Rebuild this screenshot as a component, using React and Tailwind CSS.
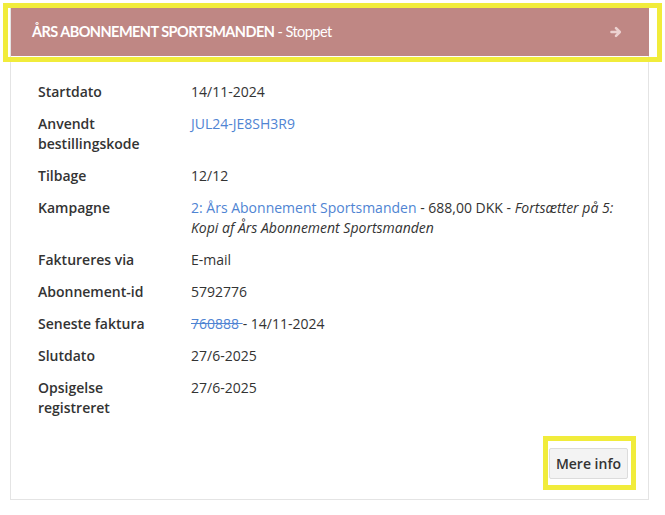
import React from 'react';

const rows = [
  { label: 'Startdato', value: '14/11-2024' },
  { label: ['Anvendt', 'bestillingskode'], value: <a className="text-[#4f84d3]">JUL24-JE8SH3R9</a> },
  { label: 'Tilbage', value: '12/12' },
  {
    label: 'Kampagne',
    value: (
      <>
        <a className="text-[#4f84d3]">2: Års Abonnement Sportsmanden</a> - 688,00 DKK -{' '}
        <em>Fortsætter på 5:</em>
        <br />
        <em>Kopi af Års Abonnement Sportsmanden</em>
      </>
    ),
  },
  { label: 'Faktureres via', value: 'E-mail' },
  { label: 'Abonnement-id', value: '5792776' },
  {
    label: 'Seneste faktura',
    value: (
      <>
        <a className="text-[#4f84d3] line-through">760888 </a>- 14/11-2024
      </>
    ),
  },
  { label: 'Slutdato', value: '27/6-2025' },
  { label: ['Opsigelse', 'registreret'], value: '27/6-2025' },
];

function ArrowIcon() {
  return (
    <svg width="12" height="12" viewBox="0 0 12 12" fill="none">
      <path d="M1.5 6h8M6 2.2L9.8 6 6 9.8" stroke="#ecd2d1" strokeWidth="2.6" strokeLinecap="round" strokeLinejoin="round" />
    </svg>
  );
}

export default function App() {
  return (
    <div className="relative w-[665px] h-[515px] bg-white pl-[10px] pt-[8px] font-['Open_Sans',sans-serif] text-[14px] leading-[20px] text-[#333]">
      <div className="w-[639px] border border-t-0 border-[#e4e4e4]">
        <div className="h-[48px] bg-[#bf8784] flex items-center justify-between pl-[21px] pr-[27px] -mr-px">
          <div className="text-white text-[14.5px] tracking-[-0.55px] font-['Lato',sans-serif]">
            <span className="font-bold">ÅRS ABONNEMENT SPORTSMANDEN</span> - Stoppet
          </div>
          <ArrowIcon />
        </div>
        <div className="pt-[26px] pl-[27px] pr-[20px] pb-[20px]">
          <div className="flex flex-col gap-[12px]">
            {rows.map((r, i) => (
              <div key={i} className="flex">
                <div className="w-[153px] shrink-0 font-semibold">
                  {Array.isArray(r.label) ? r.label.map((l) => <div key={l}>{l}</div>) : r.label}
                </div>
                <div className="flex-1">{r.value}</div>
              </div>
            ))}
          </div>
          <div className="flex justify-end mt-[30px]">
            <button className="h-[31px] px-[6px] bg-[#f3f3f3] border border-[#dcdcdc] rounded-[2px] font-semibold text-[14px] text-[#333]">
              Mere info
            </button>
          </div>
        </div>
      </div>
      <div className="absolute left-[3px] top-[3px] w-[659px] h-[59px] border-[5px] border-[#f1ec3b] pointer-events-none" />
      <div className="absolute left-[543px] top-[436px] w-[93px] h-[54px] border-[5px] border-[#f1ec3b] pointer-events-none" />
    </div>
  );
}
